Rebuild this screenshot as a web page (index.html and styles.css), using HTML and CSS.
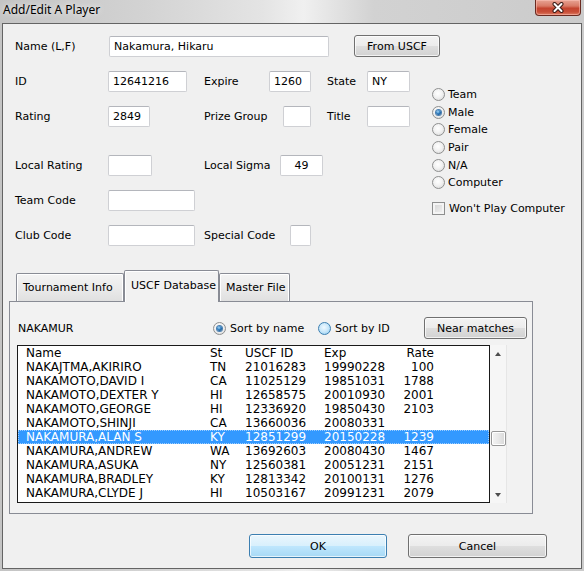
FILE: index.html
```html
<!DOCTYPE html>
<html lang="en">
<head>
    <meta charset="UTF-8">
    <meta name="viewport" content="width=device-width, initial-scale=1.0">
    <title>Add/Edit A Player</title>
    <link rel="stylesheet" href="styles.css">
</head>
<body>

<div class="window">
    <div class="titlebar">
        <div class="title">Add/Edit A Player</div>
        <div class="close">
            <svg width="14" height="11" viewBox="0 0 14 11">
                <path d="M3.5 2 L10.5 9 M10.5 2 L3.5 9" stroke="#3b1d18" stroke-width="4" stroke-linecap="round"/>
                <path d="M3.5 2 L10.5 9 M10.5 2 L3.5 9" stroke="#ffffff" stroke-width="2" stroke-linecap="round"/>
            </svg>
        </div>
    </div>

    <div class="client">
        <div class="top">
            <div class="form">
                <div class="name-row">
                    <span class="lbl">Name (L,F)</span>
                    <input class="box name-box" type="text" value="Nakamura, Hikaru">
                    <button class="btn uscf-btn">From USCF</button>
                </div>

                <div class="row">
                    <span class="lbl">ID</span>
                    <span class="cell"><input class="box id-box" type="text" value="12641216"></span>
                    <span class="cell"><span class="lbl l-expire">Expire</span><input class="box expire-box" type="text" value="1260"></span>
                    <span class="lbl">State</span>
                    <input class="box state-box" type="text" value="NY">
                </div>

                <div class="row">
                    <span class="lbl">Rating</span>
                    <span class="cell"><input class="box rating-box" type="text" value="2849"></span>
                    <span class="cell"><span class="lbl l-prize">Prize Group</span><input class="box prize-box" type="text"></span>
                    <span class="lbl">Title</span>
                    <input class="box state-box" type="text">
                </div>

                <div class="row row-far">
                    <span class="lbl">Local Rating</span>
                    <span class="cell"><input class="box local-box" type="text"></span>
                    <span class="cell"><span class="lbl l-sigma">Local Sigma</span><input class="box sigma-box" type="text" value="49"></span>
                </div>

                <div class="row">
                    <span class="lbl">Team Code</span>
                    <span class="cell"><input class="box code-box" type="text"></span>
                </div>

                <div class="row">
                    <span class="lbl">Club Code</span>
                    <span class="cell"><input class="box code-box" type="text"></span>
                    <span class="cell"><span class="lbl l-special">Special Code</span><input class="box special-box" type="text"></span>
                </div>
            </div>

            <div class="side">
                <div class="opt"><span class="radio"></span>Team</div>
                <div class="opt"><span class="radio"><span class="dot"></span></span>Male</div>
                <div class="opt"><span class="radio"></span>Female</div>
                <div class="opt"><span class="radio"></span>Pair</div>
                <div class="opt"><span class="radio"></span>N/A</div>
                <div class="opt"><span class="radio"></span>Computer</div>
                <div class="opt check-opt"><span class="check"></span>Won't Play Computer</div>
            </div>
        </div>

        <div class="tab-area">
            <div class="tabs">
                <div class="tab tab-info">Tournament Info</div>
                <div class="tab tab-uscf active">USCF Database</div>
                <div class="tab tab-master">Master File</div>
            </div>

            <div class="panel">
                <div class="search-row">
                    <span class="search-lbl">NAKAMUR</span>
                    <span class="sort sort-name"><span class="radio"><span class="dot"></span></span>Sort by name</span>
                    <span class="sort sort-id"><span class="radio hover"></span>Sort by ID</span>
                    <button class="btn near-btn">Near matches</button>
                </div>

                <div class="list-wrap">
                    <div class="list">
                        <div class="lrow head"><span>Name</span><span>St</span><span>USCF ID</span><span>Exp</span><span class="rate">Rate</span></div>
                        <div class="lrow"><span>NAKAJTMA,AKIRIRO</span><span>TN</span><span>21016283</span><span>19990228</span><span class="rate">100</span></div>
                        <div class="lrow"><span>NAKAMOTO,DAVID I</span><span>CA</span><span>11025129</span><span>19851031</span><span class="rate">1788</span></div>
                        <div class="lrow"><span>NAKAMOTO,DEXTER Y</span><span>HI</span><span>12658575</span><span>20010930</span><span class="rate">2001</span></div>
                        <div class="lrow"><span>NAKAMOTO,GEORGE</span><span>HI</span><span>12336920</span><span>19850430</span><span class="rate">2103</span></div>
                        <div class="lrow"><span>NAKAMOTO,SHINJI</span><span>CA</span><span>13660036</span><span>20080331</span><span class="rate"></span></div>
                        <div class="lrow sel"><span>NAKAMURA,ALAN S</span><span>KY</span><span>12851299</span><span>20150228</span><span class="rate">1239</span></div>
                        <div class="lrow"><span>NAKAMURA,ANDREW</span><span>WA</span><span>13692603</span><span>20080430</span><span class="rate">1467</span></div>
                        <div class="lrow"><span>NAKAMURA,ASUKA</span><span>NY</span><span>12560381</span><span>20051231</span><span class="rate">2151</span></div>
                        <div class="lrow"><span>NAKAMURA,BRADLEY</span><span>KY</span><span>12813342</span><span>20100131</span><span class="rate">1276</span></div>
                        <div class="lrow"><span>NAKAMURA,CLYDE J</span><span>HI</span><span>10503167</span><span>20991231</span><span class="rate">2079</span></div>
                    </div>
                    <div class="scroll">
                        <div class="arrow"><span class="tri up"></span></div>
                        <div class="track"><div class="thumb"></div></div>
                        <div class="arrow"><span class="tri down"></span></div>
                    </div>
                </div>
            </div>
        </div>

        <div class="actions">
            <button class="btn ok-btn">OK</button>
            <button class="btn cancel-btn">Cancel</button>
        </div>
    </div>
</div>

</body>
</html>
```

FILE: styles.css
```css
* {
    box-sizing: border-box;
}

body {
    margin: 0;
    font-family: "DejaVu Sans", sans-serif;
    font-size: 11px;
    color: #000;
    background-color: #fff;
}

.window {
    width: 584px;
    height: 571px;
    overflow: hidden;
    background: linear-gradient(to right, #c4c4c4 0%, #d3d3d3 25%, #e4e4e4 45%, #f0f0f0 52%, #d2d2d2 64%, #cbcbcb 100%);
}

/* title bar */

.titlebar {
    height: 23px;
    display: flex;
    justify-content: space-between;
    align-items: flex-start;
    padding-left: 3px;
}

.title {
    font-family: "Noto Sans", sans-serif;
    font-size: 12px;
    line-height: 20px;
    color: #000;
    text-shadow: 0 0 6px #fff;
}

.close {
    width: 46px;
    height: 16px;
    margin-right: 3px;
    display: flex;
    align-items: center;
    justify-content: center;
    border: 1px solid #6a2a20;
    border-top: 0;
    border-radius: 0 0 4px 4px;
    background: linear-gradient(#e7a393 0%, #d97a66 40%, #c4442f 55%, #c94f38 80%, #dd7f66 100%);
    box-shadow: inset 0 0 0 1px rgba(255, 200, 190, 0.5);
}

.client {
    margin: 0 2px;
    height: 546px;
    border: 1px solid #646464;
    background-color: #f0f0f0;
}

/* top form */

.top {
    display: flex;
}

.form {
    width: 429px;
    flex: none;
    padding-left: 12px;
    padding-top: 11px;
}

.name-row {
    display: flex;
    align-items: flex-end;
    height: 22px;
}

.name-row > * {
    flex: none;
}

.name-row .lbl {
    width: 94px;
    align-self: center;
}

.row {
    display: grid;
    grid-template-columns: 93px 96px 123px 40px 43px;
    align-items: center;
    height: 21px;
    margin-top: 14px;
}

.row-far {
    margin-top: 28px;
}

.cell {
    display: flex;
    align-items: center;
}

.cell > * {
    flex: none;
}

.box {
    height: 21px;
    padding: 0 4px;
    border: 1px solid #cfd0d4;
    border-top-color: #b4b6bc;
    border-radius: 2px;
    background-color: #fff;
    font: inherit;
    color: #000;
    outline: none;
}

.name-box { width: 220px; }
.id-box { width: 79px; }
.expire-box { width: 42px; }
.state-box { width: 43px; }
.rating-box { width: 42px; }
.prize-box { width: 28px; }
.local-box { width: 44px; }
.sigma-box { width: 43px; text-align: center; }
.code-box { width: 87px; }
.special-box { width: 21px; }

.l-expire { width: 65px; }
.l-prize { width: 79px; }
.l-sigma { width: 76px; }
.l-special { width: 86px; }

.btn {
    padding: 0;
    border: 1px solid #707070;
    border-radius: 3px;
    background: linear-gradient(#f3f3f3 0%, #ececec 48%, #dedede 52%, #d2d2d2 100%);
    box-shadow: inset 0 0 0 1px rgba(255, 255, 255, 0.7);
    font: inherit;
    color: #000;
}

.uscf-btn {
    width: 86px;
    height: 22px;
    margin-left: 25px;
}

/* sex options */

.side {
    padding-top: 62px;
}

.opt {
    display: flex;
    align-items: center;
    gap: 3px;
    height: 17.6px;
}

.check-opt {
    margin-top: 8px;
}

.radio {
    width: 13px;
    height: 13px;
    flex: none;
    display: flex;
    align-items: center;
    justify-content: center;
    border: 1px solid #8e8f8f;
    border-radius: 50%;
    background: radial-gradient(circle at 45% 40%, #ffffff 0%, #f2f2f2 45%, #d4d4d4 100%);
}

.radio.hover {
    border-color: #3c7fb1;
    background: radial-gradient(circle at 45% 40%, #f0f9ff 0%, #c8e7fa 50%, #86c6ee 100%);
}

.dot {
    width: 5px;
    height: 5px;
    border-radius: 50%;
    background: radial-gradient(circle at 40% 35%, #a6d8f7 0%, #2a78bc 45%, #123f6e 100%);
    box-shadow: 0 0 0 1px #4a7fb0;
}

.check {
    width: 13px;
    height: 13px;
    flex: none;
    border: 1px solid #8e8f8f;
    background: linear-gradient(135deg, #d2d2d2 0%, #f4f4f4 100%);
    box-shadow: inset 0 0 0 2px #f4f4f4;
    margin-right: 1px;
}

/* tabs */

.tab-area {
    margin-left: 6px;
    margin-top: 24px;
}

.tabs {
    display: flex;
    align-items: flex-end;
    height: 31px;
    padding-left: 7px;
}

.tab {
    height: 28px;
    display: flex;
    align-items: center;
    padding-left: 6px;
    border: 1px solid #898c95;
    border-bottom: 0;
    border-radius: 2px 2px 0 0;
    background: linear-gradient(#f4f4f4 0%, #ebebeb 50%, #e0e0e0 100%);
    box-shadow: inset 1px 1px 0 #fff, inset -1px 0 0 #fff;
}

.tab-info { width: 108px; }
.tab-uscf { width: 95px; }
.tab-master { width: 71px; }

.tab.active {
    position: relative;
    z-index: 1;
    height: 32px;
    margin-bottom: -1px;
    padding-bottom: 3px;
    background: #f2f2f2;
    box-shadow: inset 1px 1px 0 #fff;
}

.panel {
    width: 524px;
    height: 213px;
    border: 1px solid #898c95;
    background-color: #f2f2f2;
}

.search-row {
    display: flex;
    align-items: center;
    height: 22px;
    margin-top: 15px;
    padding-left: 8px;
}

.search-row > * {
    flex: none;
}

.search-lbl { width: 195px; }

.sort {
    display: flex;
    align-items: center;
    gap: 4px;
}

.sort-name { width: 105px; }
.sort-id { width: 106px; }

.near-btn {
    width: 103px;
    height: 22px;
}

/* player list */

.list-wrap {
    display: flex;
    margin-top: 6px;
    margin-left: 7px;
}

.list {
    width: 473px;
    height: 158px;
    overflow: hidden;
    border: 1px solid #1a1a1a;
    background-color: #fff;
}

.lrow {
    display: grid;
    grid-template-columns: 184px 35px 79px 62px 48px;
    height: 14px;
    padding-left: 8px;
    font-size: 12px;
    line-height: 14px;
    white-space: nowrap;
}

.lrow .rate {
    text-align: right;
}

.lrow.sel {
    background-color: #3399ff;
    color: #fff;
    outline: 1px dotted #9ccdff;
    outline-offset: -1px;
}

.scroll {
    width: 17px;
    height: 158px;
    display: flex;
    flex-direction: column;
    background-color: #f6f6f6;
    border-right: 1px solid #e6e6e6;
}

.arrow {
    height: 17px;
    display: flex;
    align-items: center;
    justify-content: center;
}

.tri {
    width: 0;
    height: 0;
    border-left: 3.5px solid transparent;
    border-right: 3.5px solid transparent;
}

.tri.up { border-bottom: 4px solid #4d4d4d; }
.tri.down { border-top: 4px solid #4d4d4d; }

.track {
    flex: 1;
    padding-top: 69px;
    padding-left: 1px;
}

.thumb {
    width: 15px;
    height: 15px;
    border: 1px solid #979797;
    border-radius: 2px;
    background: linear-gradient(to right, #f4f4f4 0%, #e8e8e8 50%, #d8d8d8 100%);
    box-shadow: inset 0 0 0 1px #fff;
}

/* dialog buttons */

.actions {
    display: flex;
    gap: 21px;
    margin-top: 20px;
    padding-left: 246px;
}

.ok-btn,
.cancel-btn {
    height: 24px;
}

.ok-btn {
    width: 138px;
    border-color: #3c7fb1;
    background: linear-gradient(#eaf6fd 0%, #d9f0fc 48%, #bee6fd 52%, #a7d9f5 100%);
}

.cancel-btn {
    width: 139px;
}
```
